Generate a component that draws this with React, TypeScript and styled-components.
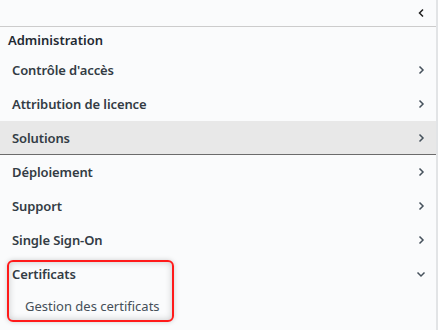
import React from "react";
import styled, { createGlobalStyle } from "styled-components";

const Global = createGlobalStyle`
  body {
    margin: 0;
    background: #fafbfc;
    font-family: "Noto Sans", "Open Sans", sans-serif;
  }
`;

const Nav = styled.nav`
  position: relative;
  width: 436px;
  height: 330px;
  background: #fafbfc;
  border-right: 2px solid #e2e4e6;
  color: #333c44;
  overflow: hidden;
`;

const Toolbar = styled.div`
  height: 26px;
  display: flex;
  align-items: center;
  justify-content: flex-end;
  padding-right: 9px;
  border-bottom: 1px solid #cccccc;
`;

const GroupTitle = styled.div`
  height: 26px;
  display: flex;
  align-items: center;
  padding-left: 8px;
  font-size: 13px;
  font-weight: 600;
  color: #1f2a33;
`;

const Row = styled.div<{ $active?: boolean }>`
  height: 34px;
  display: flex;
  align-items: center;
  justify-content: space-between;
  padding: 0 10px 0 12px;
  font-size: 13px;
  font-weight: 600;
  letter-spacing: -0.1px;
  background: ${({ $active }) => ($active ? "#e8e8e8" : "transparent")};
  box-shadow: ${({ $active }) => ($active ? "inset 0 -1px 0 #6b6b6b" : "none")};
`;

const Child = styled.div`
  height: 30px;
  display: flex;
  align-items: center;
  padding-left: 25px;
  font-size: 13px;
  font-weight: 400;
  color: #454f58;
`;

const Highlight = styled.div`
  position: absolute;
  left: 7px;
  top: 260px;
  width: 163px;
  height: 58px;
  border: 2px solid #ff1a1a;
  border-radius: 6px;
  box-shadow: inset 0 0 7px rgba(0, 0, 0, 0.2), 0 0 5px rgba(0, 0, 0, 0.18);
  pointer-events: none;
`;

const Thumb = styled.div`
  position: absolute;
  right: -2px;
  top: 285px;
  width: 2px;
  height: 26px;
  background: #a0a0a0;
`;

type Dir = "left" | "right" | "down";

function Chevron({ dir }: { dir: Dir }) {
  const d =
    dir === "left" ? "M6 1.5 2.5 5 6 8.5" : dir === "right" ? "M3.5 1.5 7 5 3.5 8.5" : "M1.5 3.5 5 7 8.5 3.5";
  return (
    <svg width="10" height="10" viewBox="0 0 10 10">
      <path d={d} fill="none" stroke={dir === "left" ? "#1f1f1f" : "#46525c"} strokeWidth="1.5" />
    </svg>
  );
}

const items = [
  "Contrôle d'accès",
  "Attribution de licence",
  "Solutions",
  "Déploiement",
  "Support",
  "Single Sign-On",
];

export default function App() {
  return (
    <>
      <Global />
      <Nav>
        <Toolbar>
          <Chevron dir="left" />
        </Toolbar>
        <GroupTitle>Administration</GroupTitle>
        {items.map((label) => (
          <Row key={label} $active={label === "Solutions"}>
            <span>{label}</span>
            <Chevron dir="right" />
          </Row>
        ))}
        <Row>
          <span>Certificats</span>
          <Chevron dir="down" />
        </Row>
        <Child>Gestion des certificats</Child>
        <Highlight />
        <Thumb />
      </Nav>
    </>
  );
}
